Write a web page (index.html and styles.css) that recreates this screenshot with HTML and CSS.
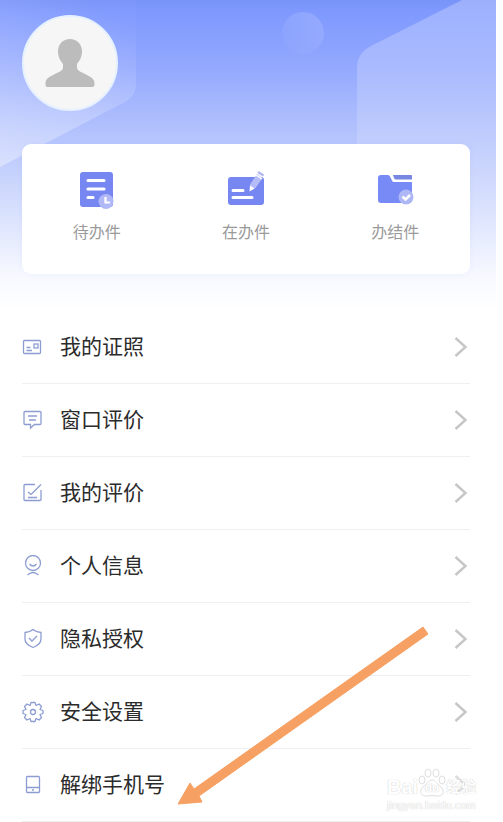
FILE: index.html
```html
<!doctype html>
<html lang="zh-CN">
  <head>
    <meta charset="utf-8">
    <meta name="viewport" content="width=device-width, initial-scale=1">
    <title>个人中心</title>
    <link rel="stylesheet" href="styles.css">
  </head>
  <body>
    <div class="page">
      <svg class="backdrop" viewBox="0 0 496 310" preserveAspectRatio="none" aria-hidden="true">
        <defs>
          <linearGradient id="sky" x1="0" y1="0" x2="0" y2="1">
            <stop offset="0" stop-color="#7994f8"/>
            <stop offset="0.04" stop-color="#7f99fe"/>
            <stop offset="0.22" stop-color="#94a9fe"/>
            <stop offset="0.44" stop-color="#b5c4fd"/>
            <stop offset="0.66" stop-color="#d5defd"/>
            <stop offset="0.88" stop-color="#f6f8ff"/>
            <stop offset="1" stop-color="#ffffff"/>
          </linearGradient>
          <linearGradient id="leftShade" x1="0.6" y1="0" x2="0.2" y2="1">
            <stop offset="0" stop-color="#fff" stop-opacity="0.02"/>
            <stop offset="1" stop-color="#fff" stop-opacity="0.36"/>
          </linearGradient>
          <linearGradient id="rightShade" x1="0" y1="0" x2="0" y2="1">
            <stop offset="0" stop-color="#fff" stop-opacity="0.26"/>
            <stop offset="0.5" stop-color="#fff" stop-opacity="0.13"/>
            <stop offset="1" stop-color="#fff" stop-opacity="0"/>
          </linearGradient>
          <linearGradient id="moon" x1="1" y1="0" x2="0.4" y2="1">
            <stop offset="0" stop-color="#fff" stop-opacity="0.17"/>
            <stop offset="1" stop-color="#fff" stop-opacity="0.02"/>
          </linearGradient>
        </defs>
        <rect width="496" height="310" fill="url(#sky)"/>
        <path d="M0 0H136V84Q136 96 125 102L0 167Z" fill="url(#leftShade)"/>
        <path d="M496 0H462L371 46Q357 53 357 68V310H496Z" fill="url(#rightShade)"/>
        <circle cx="303" cy="33" r="21" fill="url(#moon)"/>
      </svg>

      <header class="profile">
        <button class="avatar" type="button" aria-label="头像">
          <svg width="50" height="50" viewBox="0 0 50 50" aria-hidden="true">
            <path d="M25 1C32 1 37 6 37 13.500C37 19 34.500 23 32 26V29C32 32 34 33 38 35C44 38 49.500 40 49.500 45V47Q49.500 49 47.500 49H2.500Q0.500 49 0.500 47V45C0.500 40 6 38 12 35C16 33 18 32 18 29V26C15.500 23 13 19 13 13.500C13 6 18 1 25 1Z" fill="#bcbcbc"/>
          </svg>
        </button>
      </header>

      <nav class="tasks">
        <a class="task" href="#todo">
          <svg width="38" height="40" viewBox="0 0 38 40" aria-hidden="true">
            <rect x="2" y="2" width="33" height="35" rx="3" fill="#7787f2"/>
            <path d="M10 10.500H26M10 19H26M10 27.500H15" stroke="#fff" stroke-width="3.200" stroke-linecap="round"/>
            <circle cx="28" cy="31.500" r="7.500" fill="#b1b8f7"/>
            <path d="M27.500 27V32.500H32" fill="none" stroke="#fff" stroke-width="2.200"/>
          </svg>
          <span>待办件</span>
        </a>
        <a class="task" href="#doing">
          <svg width="38" height="40" viewBox="0 0 38 40" aria-hidden="true">
            <rect x="1" y="7" width="36" height="28" rx="3" fill="#7787f2"/>
            <path d="M6 20.500H16M6 27.500H25" stroke="#fff" stroke-width="3" stroke-linecap="round"/>
            <path d="M23 14.500L30 4L35.500 8L28.500 18L23.500 20.500Z" fill="#b6bcf7"/>
            <path d="M23 15.500L27.500 18.500L22.500 21.500Z" fill="#fff"/>
            <path d="M29 5L35 9" stroke="#fff" stroke-width="1.500"/>
            <path d="M31 2L36.500 5.500" stroke="#b0b7ee" stroke-width="2.500"/>
          </svg>
          <span>在办件</span>
        </a>
        <a class="task" href="#done">
          <svg width="38" height="40" viewBox="0 0 38 40" aria-hidden="true">
            <path d="M5 5H12Q13.500 5 14 6.500L16 10.500Q16.500 12 18 12H36V30Q36 33 33 33H5Q2 33 2 30V8Q2 5 5 5Z" fill="#788af6"/>
            <path d="M17 5H35Q36 5 36 6V9.500H20Q18.500 9.500 18 8Z" fill="#7787e2"/>
            <circle cx="30" cy="27" r="7.500" fill="#adb7f6"/>
            <path d="M26.500 26.500L29.500 29.500L34 25" fill="none" stroke="#fff" stroke-width="2.500"/>
          </svg>
          <span>办结件</span>
        </a>
      </nav>

      <main class="menu">
        <a class="row" href="#licence">
          <svg class="icon" viewBox="0 0 22 22" aria-hidden="true">
            <rect x="1.500" y="4.500" width="17" height="13" rx="1"/>
            <rect x="12" y="8" width="4" height="4"/>
            <path d="M4.500 11.500H8.500M4.500 14.500H10"/>
          </svg>
          <span class="label">我的证照</span>
          <svg class="chevron" viewBox="0 0 14 22" aria-hidden="true"><path d="M1.500 2L11.500 11L1.500 20"/></svg>
        </a>
        <a class="row" href="#window">
          <svg class="icon" viewBox="0 0 22 22" aria-hidden="true">
            <path d="M3 2.500H18Q19 2.500 19 3.500V14.500Q19 15.500 18 15.500H12.500L8.500 19V15.500H3Q2 15.500 2 14.500V3.500Q2 2.500 3 2.500Z"/>
            <path d="M6 7H15M7 11H14"/>
          </svg>
          <span class="label">窗口评价</span>
          <svg class="chevron" viewBox="0 0 14 22" aria-hidden="true"><path d="M1.500 2L11.500 11L1.500 20"/></svg>
        </a>
        <a class="row" href="#review">
          <svg class="icon" viewBox="0 0 22 22" aria-hidden="true">
            <path d="M13 2.500H3Q2 2.500 2 3.500V17.500Q2 18.500 3 18.500H18Q19 18.500 19 17.500V8"/>
            <path d="M19 2.500L9 12.500M6 10L9 12.500M6 15.500H15"/>
          </svg>
          <span class="label">我的评价</span>
          <svg class="chevron" viewBox="0 0 14 22" aria-hidden="true"><path d="M1.500 2L11.500 11L1.500 20"/></svg>
        </a>
        <a class="row" href="#profile">
          <svg class="icon" viewBox="0 0 22 22" aria-hidden="true">
            <circle cx="11" cy="8" r="7.500"/>
            <path d="M7.500 9Q11 13 14.500 9M5.500 20Q11 15 16.500 20"/>
          </svg>
          <span class="label">个人信息</span>
          <svg class="chevron" viewBox="0 0 14 22" aria-hidden="true"><path d="M1.500 2L11.500 11L1.500 20"/></svg>
        </a>
        <a class="row" href="#privacy">
          <svg class="icon" viewBox="0 0 22 22" aria-hidden="true">
            <path d="M11 1.500Q14.500 4.500 19 4.500V11C19 16 15 18 11 19.500C7 18 3 16 3 11V4.500Q7.500 4.500 11 1.500Z"/>
            <path d="M7 10L10 13L15 8"/>
          </svg>
          <span class="label">隐私授权</span>
          <svg class="chevron" viewBox="0 0 14 22" aria-hidden="true"><path d="M1.500 2L11.500 11L1.500 20"/></svg>
        </a>
        <a class="row" href="#security">
          <svg class="icon" viewBox="0 0 22 22" aria-hidden="true">
            <path d="M9 1.500H13L14 4.500L17 3L19.500 5.500L18 8.500L21 9.500V12.500L18 13.500L19.500 16.500L17 19L14 17.500L13 20.500H9L8 17.500L5 19L2.500 16.500L4 13.500L1 12.500V9.500L4 8.500L2.500 5.500L5 3L8 4.500Z" stroke-linejoin="round"/>
            <circle cx="11" cy="11" r="2.500"/>
          </svg>
          <span class="label">安全设置</span>
          <svg class="chevron" viewBox="0 0 14 22" aria-hidden="true"><path d="M1.500 2L11.500 11L1.500 20"/></svg>
        </a>
        <a class="row" href="#unbind">
          <svg class="icon" viewBox="0 0 22 22" aria-hidden="true">
            <rect x="4.500" y="2.500" width="13" height="16" rx="1"/>
            <path d="M4.500 13.500H17.500M10 16H12"/>
          </svg>
          <span class="label">解绑手机号</span>
          <svg class="chevron chevron-faded" viewBox="0 0 14 22" aria-hidden="true"><path d="M1.500 2L11.500 11L1.500 20"/></svg>
        </a>
      </main>

      <svg class="arrow" viewBox="0 0 250 178" aria-hidden="true">
        <path d="M0 177L12 156L16 162L245 0L250 7L21 169L24 175Z" fill="#f6a163" stroke="#f6a163"/>
      </svg>

      <div class="watermark">
        <div class="brand">
          <span>Bai</span>
          <span class="paw">
            <svg viewBox="0 0 28 30" aria-hidden="true">
              <ellipse cx="4" cy="12" rx="3" ry="4"/>
              <ellipse cx="10" cy="5" rx="3" ry="4"/>
              <ellipse cx="18" cy="5" rx="3" ry="4"/>
              <ellipse cx="24" cy="12" rx="3" ry="4"/>
              <path d="M14 12C18 12 19 16 23 19C28 24 24 29 19 28Q14 27 9 28C4 29 0 24 5 19C9 16 10 12 14 12Z"/>
            </svg>
            <span class="du">du</span>
          </span>
          <span class="cn">经验</span>
        </div>
        <div class="site">jingyan.baidu.com</div>
      </div>
    </div>
  </body>
</html>
```
FILE: styles.css
```css
* {
  box-sizing: border-box;
}

body {
  margin: 0;
  background: #fff;
  color: #2b2b2b;
  font-family: "Liberation Sans", "Noto Sans CJK SC", sans-serif;
}

.page {
  position: relative;
  margin-right: 7px;
  overflow: hidden;
}

/* Header artwork */
.backdrop {
  position: absolute;
  top: 0;
  left: 0;
  z-index: -1;
  width: 100%;
  height: 310px;
}

.profile {
  padding: 15px 22px 33px;
}

.avatar {
  display: flex;
  align-items: center;
  justify-content: center;
  width: 96px;
  height: 96px;
  padding: 0;
  border: 2px solid #e6f1ff;
  border-radius: 50%;
  background: #f6f6f7;
  cursor: pointer;
}

/* Task card */
.tasks {
  display: grid;
  grid-template-columns: repeat(3, 1fr);
  height: 130px;
  margin: 0 26px 37px 22px;
  padding-top: 26px;
  border-radius: 9px;
  background: #fff;
  box-shadow: 0 0 6px rgba(120, 145, 240, 0.08);
}

.task {
  display: flex;
  flex-direction: column;
  align-items: center;
  gap: 12px;
  color: #9a9a9a;
  font-size: 16px;
  line-height: 22px;
  text-decoration: none;
}

/* Menu list */
.menu {
  margin: 0 26px 0 22px;
}

.row {
  display: flex;
  align-items: center;
  height: 73px;
  border-bottom: 1px solid #efeff1;
  color: #2b2b2b;
  text-decoration: none;
}

.icon {
  width: 22px;
  height: 22px;
  fill: none;
  stroke: #8d9dd2;
  stroke-width: 1.3;
}

.label {
  flex: 1;
  padding-left: 16px;
  font-size: 21px;
  line-height: 30px;
}

.chevron {
  width: 14px;
  height: 22px;
  margin-right: 2px;
  fill: none;
  stroke: #c6c6c6;
  stroke-width: 2.4;
}

.chevron-faded {
  opacity: 0.6;
}

/* Pointer over the last rows */
.arrow {
  position: absolute;
  right: 68px;
  bottom: 17px;
  width: 250px;
  height: 178px;
  pointer-events: none;
}

.watermark {
  position: absolute;
  right: 18px;
  bottom: 10px;
  width: 91px;
  color: #fff;
  pointer-events: none;
  text-shadow: 0 0 1px #ccc, 0 0 1px #ddd;
}

.brand {
  display: flex;
  align-items: flex-end;
  font-size: 20px;
  font-weight: bold;
  line-height: 22px;
}

.paw {
  position: relative;
  width: 28px;
  height: 30px;
}

.paw svg {
  display: block;
  width: 28px;
  height: 30px;
  fill: #fff;
  stroke: #dedede;
}

.du {
  position: absolute;
  right: 0;
  bottom: 3px;
  left: 0;
  font-size: 12px;
  line-height: 14px;
  text-align: center;
}

.cn {
  font-size: 15px;
}

.site {
  font-size: 11px;
  line-height: 14px;
}
```
